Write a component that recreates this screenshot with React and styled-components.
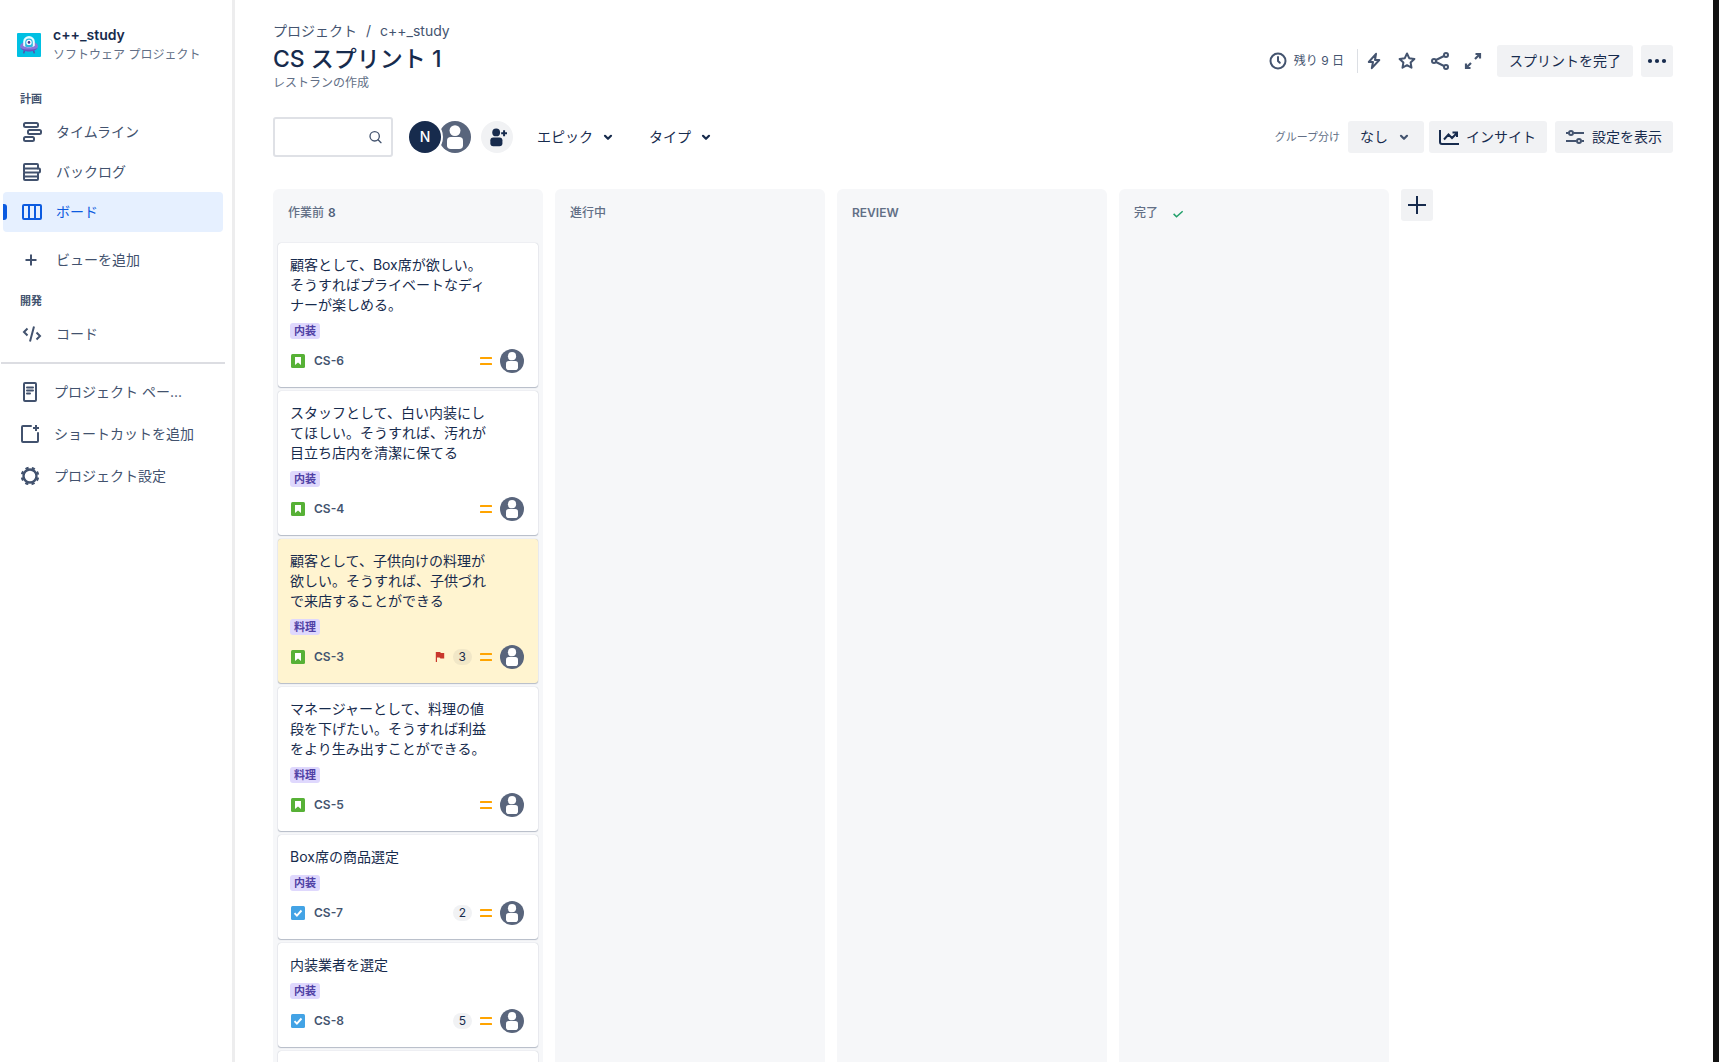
import React from "react";
import styled, { createGlobalStyle } from "styled-components";

const GlobalStyle = createGlobalStyle`
  *, *::before, *::after { box-sizing: border-box; }
  body {
    margin: 0;
    background: #fff;
    color: #172b4d;
    font-family: Inter, "Noto Sans CJK JP", sans-serif;
    font-size: 14px;
    line-height: 20px;
  }
  button, input, select { font: inherit; color: inherit; }
  svg { display: block; flex: none; }
`;

/* ---------- icons ---------- */

const Icon = ({ size = 24, children }) => (
  <svg width={size} height={size} viewBox="0 0 24 24" fill="none" stroke="currentColor" strokeWidth="2" strokeLinecap="round" strokeLinejoin="round" aria-hidden="true">
    {children}
  </svg>
);

const ProjectLogo = () => (
  <svg width="24" height="24" viewBox="0 0 24 24" aria-hidden="true">
    <rect width="24" height="24" rx="1" fill="#00c0e3" />
    <path d="M7.500 17l-.8 3.300M16.500 17l.8 3.300" stroke="#5a45a5" strokeWidth="1.400" />
    <ellipse cx="12" cy="13.200" rx="9" ry="5" fill="#8777d9" />
    <path d="M3.600 15c2 4.600 14.800 4.600 16.800 0-3.500 2-13.300 2-16.800 0z" fill="#6554c0" />
    <path d="M6.200 12.800V8.800a5.800 5.800 0 0 1 11.600 0v4c-2.400 2-9.200 2-11.600 0z" fill="#e6fcff" />
    <path d="M8.200 13.400V9.400a3.800 3.800 0 0 1 7.600 0v4c-1.600.8-6 .8-7.600 0z" fill="#2bb8e0" />
    <circle cx="12" cy="9.400" r="2.700" fill="#fff" />
    <circle cx="12" cy="9.400" r="1.300" fill="#403294" />
  </svg>
);

const TimelineIcon = () => (
  <Icon>
    <rect x="4" y="3" width="14" height="4" rx="1.500" />
    <rect x="8" y="10" width="13" height="4" rx="1.500" />
    <rect x="4" y="17" width="10" height="4" rx="1.500" />
  </Icon>
);
const BacklogIcon = () => (
  <Icon>
    <path d="M4 8.500V5a1 1 0 0 1 1-1h12a1 1 0 0 1 1 1v3.500M4 13v6a1 1 0 0 0 1 1h12a1 1 0 0 0 1-1v-5.500M4 16.500h14" />
    <path d="M4 8.500h15a1 1 0 0 1 1 1V11.500a1 1 0 0 1-1 1H5a1 1 0 0 1-1-1z" />
  </Icon>
);
const BoardIcon = () => (
  <Icon>
    <rect x="3" y="5" width="18" height="14" rx="1" />
    <path d="M9 5v14M15 5v14" />
  </Icon>
);
const AddIcon = () => (
  <Icon><path d="M11 6.500v11M5.500 12h11" strokeLinecap="butt" /></Icon>
);
const CodeIcon = () => (
  <Icon><path d="M7.500 6.500L4 10l3.500 3.500M16.500 10.500L20 14l-3.500 3.500M14 4.500l-4 15" strokeLinecap="butt" strokeLinejoin="miter" /></Icon>
);
const PageIcon = () => (
  <Icon>
    <rect x="6" y="3" width="12" height="18" rx="1" />
    <path d="M9 7.500h6M9 10.500h6M9 13.500h3" />
  </Icon>
);
const ShortcutIcon = () => (
  <Icon>
    <path d="M13 4H5a1 1 0 0 0-1 1v14a1 1 0 0 0 1 1h14a1 1 0 0 0 1-1v-8" />
    <path d="M18 3v6M15 6h6" strokeLinecap="butt" />
  </Icon>
);
const GearIcon = () => (
  <Icon>
    <circle cx="12" cy="12" r="6.500" strokeWidth="2.400" />
    <circle cx="12" cy="12" r="8.200" strokeWidth="2.200" strokeLinecap="butt" strokeDasharray="3.220 3.220" transform="rotate(11 12 12)" />
  </Icon>
);
const SearchIcon = () => (
  <Icon size={16}>
    <circle cx="11.500" cy="11" r="7" />
    <path d="M16.700 16.200l4.300 4.300" />
  </Icon>
);
const ChevronIcon = () => (
  <Icon><path d="M9 10.800l3 3 3-3" strokeWidth="2.200" /></Icon>
);
const ClockIcon = () => (
  <Icon>
    <circle cx="12" cy="12" r="7.500" />
    <path d="M12 8v4l1.800 1.800" />
  </Icon>
);
const BoltIcon = () => (
  <Icon><path d="M14 4.800L6.800 13H11l-1.200 6.200L17.300 11H13z" /></Icon>
);
const StarIcon = () => (
  <Icon><path d="M12 4.500l2.200 4.700 5.200.700-3.800 3.600.900 5.200L12 16.200l-4.500 2.500.900-5.200-3.800-3.600 5.200-.700z" /></Icon>
);
const ShareIcon = () => (
  <Icon>
    <circle cx="6" cy="12" r="2" />
    <circle cx="18" cy="6" r="2" />
    <circle cx="18" cy="18" r="2" />
    <path d="M8 11l8-4M8 13l8 4" />
  </Icon>
);
const ExpandIcon = () => (
  <Icon><path d="M14.500 5H19v4.500M19 5l-5 5M5 14.500V19h4.500M5 19l5-5" strokeLinejoin="miter" strokeLinecap="butt" strokeWidth="2.200" /></Icon>
);
const MoreIcon = () => (
  <Icon>
    <g fill="currentColor" stroke="none">
      <circle cx="5" cy="12" r="2.100" />
      <circle cx="12" cy="12" r="2.100" />
      <circle cx="19" cy="12" r="2.100" />
    </g>
  </Icon>
);
const InsightIcon = () => (
  <Icon>
    <path d="M3 5v12a2 2 0 0 0 2 2h17" strokeLinecap="butt" />
    <path d="M7 14.500l4.500-5 3.500 3.500 5-5M15.500 7.500H20V12" strokeLinecap="butt" strokeLinejoin="miter" />
  </Icon>
);
const SlidersIcon = () => (
  <Icon>
    <g stroke="#44546f">
      <path d="M3 8h2.500M10.500 8H21M3 16h10.500M18.500 16H21" strokeLinecap="butt" />
      <circle cx="8" cy="8" r="2" />
      <circle cx="16" cy="16" r="2" />
    </g>
  </Icon>
);
const PlusIcon = () => (
  <Icon><path d="M12 3v18M3 12h18" strokeLinecap="butt" /></Icon>
);
const CheckIcon = () => (
  <Icon size={14}><path d="M4.500 13.500l5 5L20 9" strokeWidth="2.600" strokeLinecap="butt" strokeLinejoin="miter" /></Icon>
);
const InviteIcon = () => (
  <Icon>
    <g fill="currentColor" stroke="none">
      <circle cx="11" cy="6.500" r="4.700" />
      <rect x="4" y="12.500" width="14.500" height="10.500" rx="3.500" />
    </g>
    <path d="M20.500 4v7M17 7.500h7" strokeLinecap="butt" strokeWidth="2.400" />
  </Icon>
);
const Person = ({ size }) => (
  <svg width={size} height={size} viewBox="0 0 24 24" aria-label="未割り当て" role="img">
    <circle cx="12" cy="12" r="12" fill="#59657c" />
    <circle cx="12" cy="7.200" r="4.100" fill="#fff" />
    <rect x="6" y="12" width="12" height="9" rx="2.800" fill="#fff" />
  </svg>
);
const StoryIcon = () => (
  <svg width="14" height="14" viewBox="0 0 14 14" aria-hidden="true">
    <rect width="14" height="14" rx="1.500" fill="#57b136" />
    <path d="M4 3h6v8L7 8.400 4 11z" fill="#fff" />
  </svg>
);
const TaskIcon = () => (
  <svg width="14" height="14" viewBox="0 0 14 14" aria-hidden="true">
    <rect width="14" height="14" rx="1.500" fill="#43a3e5" />
    <path d="M3.500 7.200l2.400 2.500 4.600-5.200" fill="none" stroke="#fff" strokeWidth="1.900" />
  </svg>
);
const PriorityIcon = () => (
  <svg width="12" height="8" viewBox="0 0 12 8" aria-hidden="true">
    <rect width="12" height="2" rx=".5" fill="#ffa400" />
    <rect y="6" width="12" height="2" rx=".5" fill="#ffa400" />
  </svg>
);
const FlagIcon = () => (
  <svg width="10" height="10" viewBox="0 0 10 10" aria-hidden="true">
    <path d="M1 0h4l1 1h3.200v5.500H5.500l-1-1H2V10H.800V0z" fill="#c9372c" />
  </svg>
);

/* ---------- page shell ---------- */

const Shell = styled.div`
  display: grid;
  grid-template-columns: 235px minmax(0, 1fr) 6px;
  height: 100vh;
  overflow: hidden;
`;
const PageEdge = styled.div`
  background: #111;
`;

/* ---------- sidebar ---------- */

const Sidebar = styled.aside`
  border-right: 3px solid #ededee;
  color: #42526e;
`;
const ProjectHeader = styled.div`
  display: flex;
  align-items: center;
  gap: 12px;
  padding: 26px 16px 27px 17px;
`;
const ProjectText = styled.div`
  display: grid;
  gap: 2px;
  line-height: 18px;
`;
const ProjectName = styled.div`
  font-weight: 600;
  color: #172b4d;
`;
const ProjectKind = styled.div`
  font-size: 12px;
  color: #626f86;
`;
const SectionTitle = styled.h2`
  margin: 0;
  padding: 0 20px 5px;
  font-size: 11px;
  line-height: 16px;
  font-weight: 700;
`;
const NavList = styled.ul`
  display: grid;
  gap: ${(p) => p.$gap || 0}px;
  margin: 0 9px ${(p) => p.$after || 0}px ${(p) => (p.$outer ? 1 : 3)}px;
  padding: 0;
  list-style: none;
`;
const NavLink = styled.a`
  position: relative;
  display: flex;
  align-items: center;
  gap: 12px;
  height: 40px;
  padding: 0 17px;
  border-radius: 4px;
  overflow: hidden;
  white-space: nowrap;
  text-decoration: none;
  color: ${(p) => (p.$active ? "#0c5be0" : "inherit")};
  background: ${(p) => (p.$active ? "#e6f0ff" : "transparent")};
  &::before {
    content: ${(p) => (p.$active ? '""' : "none")};
    position: absolute;
    left: 0;
    top: 12px;
    width: 4px;
    height: 16px;
    border-radius: 0 3px 3px 0;
    background: #0c5be0;
  }
`;
const Divider = styled.hr`
  height: 2px;
  margin: 8px 7px 8px 1px;
  border: 0;
  background: #dcdde2;
`;

const NavItem = ({ icon, label, active }) => (
  <li>
    <NavLink href="#" $active={active} aria-current={active ? "page" : undefined}>
      {icon}
      {label}
    </NavLink>
  </li>
);

/* ---------- main header ---------- */

const Main = styled.main`
  display: flex;
  flex-direction: column;
  min-width: 0;
  min-height: 0;
  padding: 19px 40px 0 38px;
`;
const Breadcrumbs = styled.nav`
  display: flex;
  gap: 9px;
  line-height: 24px;
  color: #44546f;
  a { color: inherit; text-decoration: none; }
`;
const HeaderRow = styled.header`
  display: flex;
  justify-content: space-between;
  align-items: flex-start;
`;
const Title = styled.h1`
  margin: 0;
  font-size: 23px;
  line-height: 32px;
  font-weight: 500;
`;
const Subtitle = styled.p`
  margin: 0;
  font-size: 12px;
  line-height: 16px;
  color: #626f86;
`;
const Actions = styled.div`
  display: flex;
  align-items: center;
  gap: 8px;
  padding-top: 2px;
`;
const Remaining = styled.div`
  display: flex;
  align-items: center;
  gap: 4px;
  height: 24px;
  padding-right: 13px;
  border-right: 1px solid #dcdfe4;
  font-size: 12px;
  color: #44546f;
`;
const IconGroup = styled.div`
  display: flex;
  gap: 9px;
  margin: 0 4px 0 -4px;
`;
const IconButton = styled.button`
  padding: 0;
  border: 0;
  background: none;
  color: #44546f;
`;
const Button = styled.button`
  display: flex;
  align-items: center;
  justify-content: center;
  gap: 5px;
  height: 32px;
  min-width: 32px;
  padding: 0 ${(p) => (p.$square ? 4 : p.$icon ? 11 : 12)}px 0 ${(p) => (p.$square ? 4 : p.$icon ? 8 : 12)}px;
  border: 0;
  border-radius: 3px;
  background: #f1f2f4;
  white-space: nowrap;
`;

/* ---------- toolbar ---------- */

const Toolbar = styled.div`
  display: flex;
  justify-content: space-between;
  align-items: center;
  margin: 26px 0 32px;
`;
const Filters = styled.div`
  display: flex;
  align-items: center;
`;
const SearchBox = styled.label`
  display: flex;
  align-items: center;
  width: 120px;
  height: 40px;
  padding: 0 8px;
  border: 2px solid #dfe1e6;
  border-radius: 3px;
  color: #44546f;
  input {
    flex: 1;
    min-width: 0;
    padding: 0;
    border: 0;
    outline: 0;
    background: none;
  }
`;
const Avatars = styled.div`
  display: flex;
  margin: 0 10px 0 16px;
`;
const Initial = styled.span`
  z-index: 1;
  display: grid;
  place-items: center;
  width: 32px;
  height: 32px;
  margin-right: -2px;
  border-radius: 50%;
  background: #172b4d;
  box-shadow: 0 0 0 2px #fff;
  color: #fff;
  font-weight: 500;
`;
const InviteButton = styled.button`
  display: grid;
  place-items: center;
  width: 32px;
  height: 32px;
  margin-right: 12px;
  padding: 0;
  border: 0;
  border-radius: 50%;
  background: #f1f2f4;
  svg { width: 20px; height: 20px; }
`;
const FilterButton = styled.button`
  display: flex;
  align-items: center;
  gap: 3px;
  height: 32px;
  margin-right: 5px;
  padding: 0 12px;
  border: 0;
  background: none;
`;
const ViewOptions = styled.div`
  display: flex;
  align-items: center;
  gap: 8px;
`;
const GroupLabel = styled.label`
  font-size: 11px;
  color: #626f86;
`;
const SelectBox = styled.span`
  position: relative;
  display: block;
  margin-right: -3px;
  color: #172b4d;
  select {
    appearance: none;
    display: block;
    width: 76px;
    height: 32px;
    padding: 0 32px 0 12px;
    border: 0;
    border-radius: 3px;
    background: #f1f2f4;
  }
  svg {
    position: absolute;
    right: 8px;
    top: 4px;
    pointer-events: none;
    color: #44546f;
  }
`;

/* ---------- board ---------- */

const Board = styled.div`
  display: flex;
  align-items: flex-start;
  gap: 12px;
  flex: 1;
  min-height: 0;
`;
const Column = styled.section`
  flex: none;
  width: 270px;
  height: 100%;
  padding: 0 5px;
  border-radius: 6px 6px 0 0;
  background: #f6f7f9;
  overflow: hidden;
`;
const ColumnTitle = styled.h2`
  display: flex;
  align-items: center;
  gap: 4px;
  margin: 0;
  height: 54px;
  padding: 0 10px 6px;
  font-size: 12px;
  font-weight: ${(p) => (p.$latin ? 600 : 500)};
  color: #626f86;
  svg { margin-left: 9px; color: #22a06b; }
`;
const Count = styled.span`
  font-weight: 600;
  color: #505f79;
`;
const CardList = styled.div`
  display: grid;
  gap: 4px;
`;
const Card = styled.article`
  min-height: 104px;
  padding: 12px 14px 14px 12px;
  border-radius: 3px;
  background: ${(p) => (p.$flagged ? "#fff4d0" : "#fff")};
  box-shadow: 0 1px 1px rgba(9, 30, 66, 0.25), 0 0 1px rgba(9, 30, 66, 0.31);
`;
const CardText = styled.p`
  margin: 0 0 8px;
  max-width: 200px;
`;
const Tag = styled.span`
  display: block;
  width: fit-content;
  padding: 0 4px;
  border-radius: 3px;
  background: #dfd8fd;
  color: #5040a5;
  font-size: 11px;
  line-height: 16px;
  font-weight: 700;
`;
const CardFooter = styled.footer`
  display: flex;
  align-items: center;
  gap: 8px;
  height: 24px;
  margin-top: 10px;
  padding-left: 1px;
`;
const IssueKey = styled.a`
  flex: 1;
  padding-left: 1px;
  font-size: 12px;
  font-weight: 600;
  color: #44546f;
  text-decoration: none;
`;
const Estimate = styled.span`
  min-width: 19px;
  padding: 0 6px;
  border-radius: 8px;
  background: rgba(9, 30, 66, 0.06);
  font-size: 12px;
  line-height: 16px;
  text-align: center;
`;

const issues = [
  { key: "CS-6", text: "顧客として、Box席が欲しい。そうすればプライベートなディナーが楽しめる。", tag: "内装", type: "story" },
  { key: "CS-4", text: "スタッフとして、白い内装にしてほしい。そうすれば、汚れが目立ち店内を清潔に保てる", tag: "内装", type: "story" },
  { key: "CS-3", text: "顧客として、子供向けの料理が欲しい。そうすれば、子供づれで来店することができる", tag: "料理", type: "story", points: 3, flagged: true },
  { key: "CS-5", text: "マネージャーとして、料理の値段を下げたい。そうすれば利益をより生み出すことができる。", tag: "料理", type: "story" },
  { key: "CS-7", text: "Box席の商品選定", tag: "内装", type: "task", points: 2 },
  { key: "CS-8", text: "内装業者を選定", tag: "内装", type: "task", points: 5 },
];

const IssueCard = ({ issue }) => (
  <Card $flagged={issue.flagged}>
    <CardText>{issue.text}</CardText>
    <Tag>{issue.tag}</Tag>
    <CardFooter>
      {issue.type === "story" ? <StoryIcon /> : <TaskIcon />}
      <IssueKey href="#">{issue.key}</IssueKey>
      {issue.flagged && <FlagIcon />}
      {issue.points && <Estimate>{issue.points}</Estimate>}
      <PriorityIcon />
      <Person size={24} />
    </CardFooter>
  </Card>
);

export default function App() {
  return (
    <>
      <GlobalStyle />
      <Shell>
        <Sidebar>
          <ProjectHeader>
            <ProjectLogo />
            <ProjectText>
              <ProjectName>c++_study</ProjectName>
              <ProjectKind>ソフトウェア プロジェクト</ProjectKind>
            </ProjectText>
          </ProjectHeader>
          <nav>
            <SectionTitle>計画</SectionTitle>
            <NavList $after={8}>
              <NavItem icon={<TimelineIcon />} label="タイムライン" />
              <NavItem icon={<BacklogIcon />} label="バックログ" />
              <NavItem icon={<BoardIcon />} label="ボード" active />
            </NavList>
            <NavList $after={13}>
              <NavItem icon={<AddIcon />} label="ビューを追加" />
            </NavList>
            <SectionTitle>開発</SectionTitle>
            <NavList>
              <NavItem icon={<CodeIcon />} label="コード" />
            </NavList>
            <Divider />
            <NavList $gap={2} $outer>
              <NavItem icon={<PageIcon />} label="プロジェクト ペー..." />
              <NavItem icon={<ShortcutIcon />} label="ショートカットを追加" />
              <NavItem icon={<GearIcon />} label="プロジェクト設定" />
            </NavList>
          </nav>
        </Sidebar>

        <Main>
          <Breadcrumbs>
            <a href="#">プロジェクト</a>
            <span>/</span>
            <a href="#">c++_study</a>
          </Breadcrumbs>
          <HeaderRow>
            <div>
              <Title>CS スプリント 1</Title>
              <Subtitle>レストランの作成</Subtitle>
            </div>
            <Actions>
              <Remaining>
                <ClockIcon />
                残り 9 日
              </Remaining>
              <IconGroup>
                <IconButton aria-label="自動化"><BoltIcon /></IconButton>
                <IconButton aria-label="スター"><StarIcon /></IconButton>
                <IconButton aria-label="共有"><ShareIcon /></IconButton>
                <IconButton aria-label="全画面"><ExpandIcon /></IconButton>
              </IconGroup>
              <Button>スプリントを完了</Button>
              <Button $square aria-label="その他"><MoreIcon /></Button>
            </Actions>
          </HeaderRow>

          <Toolbar>
            <Filters>
              <SearchBox>
                <input type="text" aria-label="検索" />
                <SearchIcon />
              </SearchBox>
              <Avatars>
                <Initial>N</Initial>
                <Person size={32} />
              </Avatars>
              <InviteButton aria-label="メンバーを追加"><InviteIcon /></InviteButton>
              <FilterButton aria-haspopup="menu">エピック<ChevronIcon /></FilterButton>
              <FilterButton aria-haspopup="menu">タイプ<ChevronIcon /></FilterButton>
            </Filters>
            <ViewOptions>
              <GroupLabel htmlFor="group-by">グループ分け</GroupLabel>
              <SelectBox>
                <select id="group-by"><option>なし</option></select>
                <ChevronIcon />
              </SelectBox>
              <Button $icon><InsightIcon />インサイト</Button>
              <Button $icon><SlidersIcon />設定を表示</Button>
            </ViewOptions>
          </Toolbar>

          <Board>
            <Column>
              <ColumnTitle>作業前 <Count>8</Count></ColumnTitle>
              <CardList>
                {issues.map((issue) => <IssueCard key={issue.key} issue={issue} />)}
                <Card />
              </CardList>
            </Column>
            <Column><ColumnTitle>進行中</ColumnTitle></Column>
            <Column><ColumnTitle $latin>REVIEW</ColumnTitle></Column>
            <Column><ColumnTitle>完了<CheckIcon /></ColumnTitle></Column>
            <Button $square aria-label="列を追加"><PlusIcon /></Button>
          </Board>
        </Main>
        <PageEdge />
      </Shell>
    </>
  );
}
